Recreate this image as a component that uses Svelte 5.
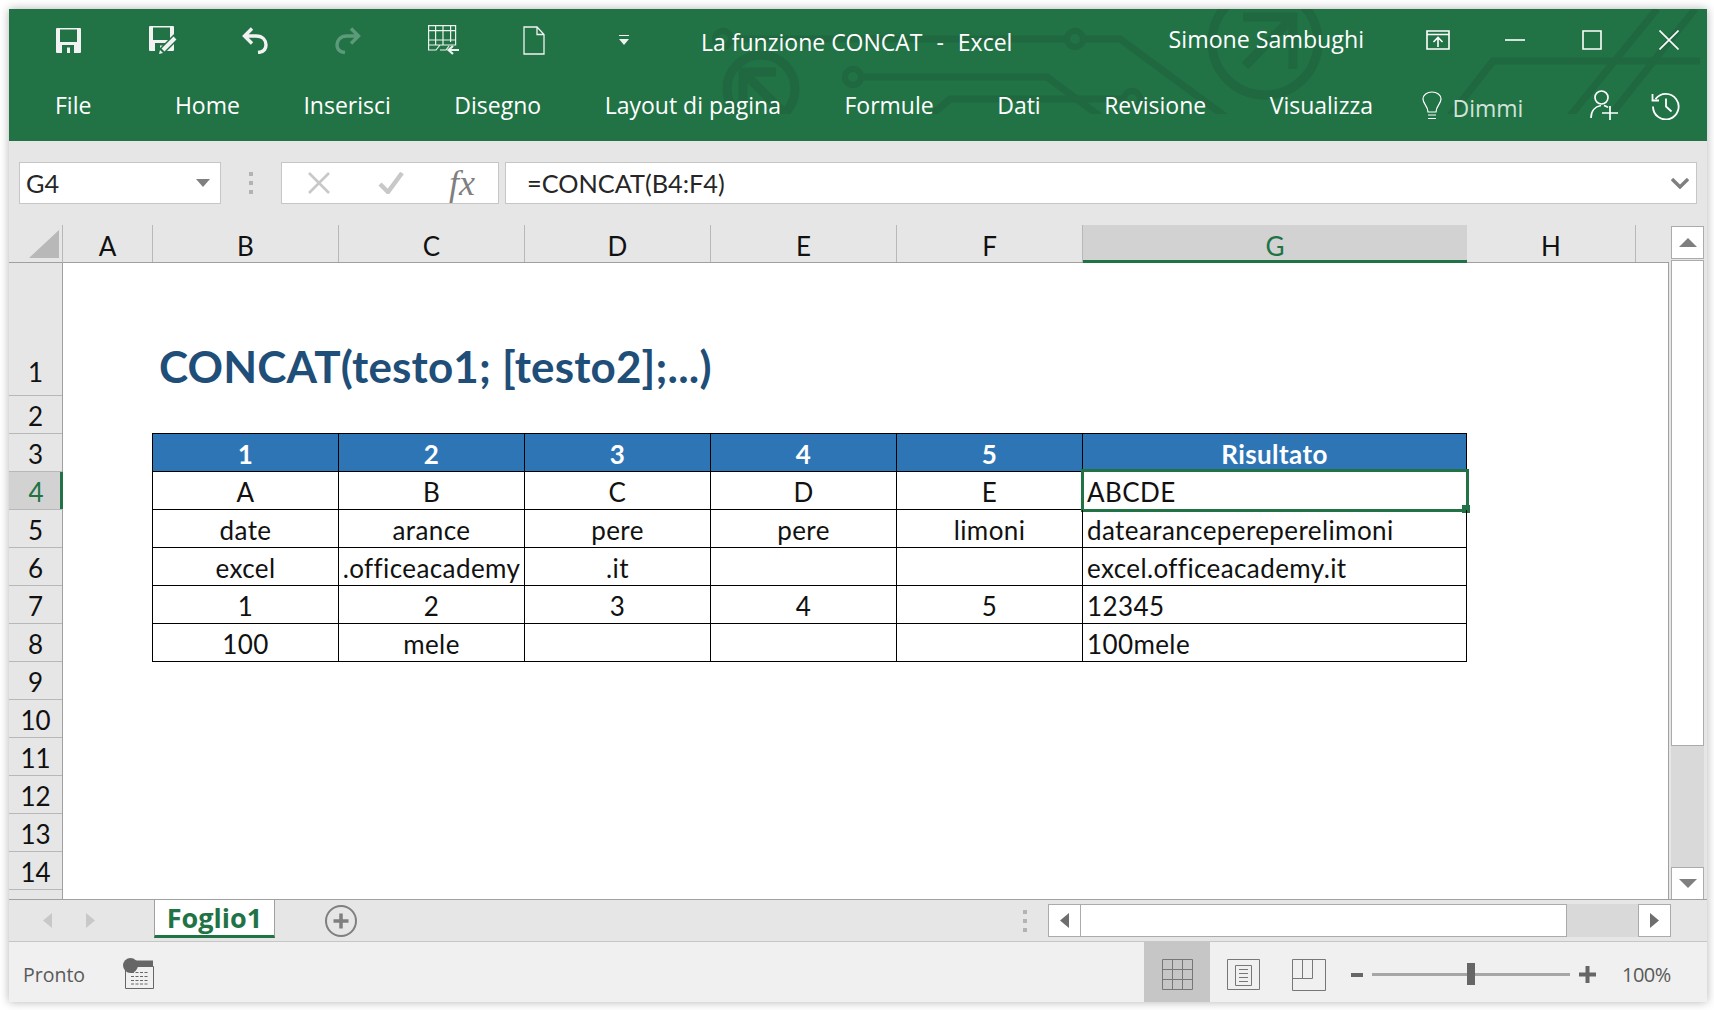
<script>
  const columns = [
    { name: 'A', w: 90 }, { name: 'B', w: 186 }, { name: 'C', w: 186 }, { name: 'D', w: 186 },
    { name: 'E', w: 186 }, { name: 'F', w: 186 }, { name: 'G', w: 384 }, { name: 'H', w: 169 }
  ];
  const rowNums = [1, 2, 3, 4, 5, 6, 7, 8, 9, 10, 11, 12, 13, 14];
  const head = ['1', '2', '3', '4', '5', 'Risultato'];
  const data = [
    ['A', 'B', 'C', 'D', 'E', 'ABCDE'],
    ['date', 'arance', 'pere', 'pere', 'limoni', 'datearancepereperelimoni'],
    ['excel', '.officeacademy', '.it', '', '', 'excel.officeacademy.it'],
    ['1', '2', '3', '4', '5', '12345'],
    ['100', 'mele', '', '', '', '100mele']
  ];
  const tabs = ['Home', 'Inserisci', 'Disegno', 'Layout di pagina', 'Formule', 'Dati', 'Revisione', 'Visualizza'];
</script>

<div class="page">
  <div class="window">
    <header class="ribbon">
      <svg class="circuit" viewBox="9 9 1698 105" fill="none" stroke="#1f6840" stroke-width="7">
        <circle cx="761" cy="89" r="34" stroke-width="9" />
        <path d="M776 72H743V105M743 72L790 119" stroke-width="9" />
        <circle cx="723" cy="39" r="8" stroke-width="6" />
        <path d="M731 39H1067M1083 39H1120L1230 120" />
        <circle cx="1075" cy="39" r="8" stroke-width="6" />
        <circle cx="853" cy="77" r="8" stroke-width="6" />
        <path d="M861 77H1047L1105 120" />
        <path d="M930 116L950 99H1124M1140 99L1160 116" />
        <circle cx="1132" cy="99" r="8" stroke-width="6" />
        <circle cx="1265" cy="42" r="53" stroke-width="9" />
        <path d="M1243 17H1293V69M1293 17L1245 66" stroke-width="9" />
        <path d="M1450 116L1493 61H1700" />
        <path d="M1657 9L1570 116M1695 9L1610 116" />
      </svg>

      <div class="top">
        <div class="qat">
          <button class="qbtn">
            <svg width="25" height="25" viewBox="0 0 25 25"><path fill="#f2f2f2" fill-rule="evenodd" d="M1 0H24a1 1 0 0 1 1 1V24a1 1 0 0 1-1 1H1a1 1 0 0 1-1-1V1a1 1 0 0 1 1-1Z M4 1.5V14H21V1.5Z M6 17V25H11V19.5H14V25H18V17Z" /></svg>
          </button>
          <button class="qbtn nudge">
            <svg width="30" height="29" viewBox="0 0 30 29">
              <path fill="#f2f2f2" fill-rule="evenodd" d="M1 0H24a1 1 0 0 1 1 1V24a1 1 0 0 1-1 1H1a1 1 0 0 1-1-1V1a1 1 0 0 1 1-1Z M4 1.5V14H21V1.5Z M6 17V25H11V19.5H14V25H18V17Z" />
              <path d="M11 27L28 10" stroke="#217346" stroke-width="7" />
              <path d="M14 24L26 12" stroke="#f2f2f2" stroke-width="4" />
              <path d="M10 28L11 24L14 27Z" fill="#f2f2f2" />
            </svg>
          </button>
          <button class="qbtn">
            <svg width="26" height="27" viewBox="0 0 26 27" fill="none" stroke="#f2f2f2" stroke-width="3.4"><path d="M10 1.5L2.5 9L10 16.5M3 9H14C21 9 24 13.5 24 18C24 22 21.5 25 16 25.5" /></svg>
          </button>
          <button class="qbtn">
            <svg width="26" height="27" viewBox="0 0 26 27" fill="none" stroke="#5c9a7a" stroke-width="3.4"><path d="M16 1.5L23.5 9L16 16.5M23 9H12C5 9 2 13.5 2 18C2 22 4.5 25 10 25.5" /></svg>
          </button>
          <button class="qbtn nudge">
            <svg width="31" height="30" viewBox="0 0 31 30" fill="none" stroke="#eef2ef" stroke-width="1.2">
              <path d="M.6.6H27.6V20H.6ZM.6 5.6H27.6M.6 15H27.6M7.6.6V20M15 .6V20M22.6.6V17M.6 20V25H8L12 20M12 25H18L21 21" />
              <path d="M31 25H21M25 21L20.500 25L25 29" stroke-width="2.2" />
            </svg>
          </button>
          <button class="qbtn">
            <svg width="22" height="29" viewBox="0 0 22 29" fill="none" stroke="#f2f2f2" stroke-width="1.3"><path d="M1 1H14L21 8.500V28H1ZM14 1V8.500H21" /></svg>
          </button>
          <button class="qbtn drop">
            <svg width="10" height="10" viewBox="0 0 10 10" fill="#f2f2f2"><path d="M0 0H10V1H0ZM0 4H10L5 10Z" /></svg>
          </button>
        </div>
        <div class="doc-title">La funzione CONCAT <span class="sep">&nbsp;-&nbsp;</span> Excel</div>
        <div class="user">Simone Sambughi</div>
        <div class="controls">
          <button class="ctl">
            <svg width="24" height="20" viewBox="0 0 24 20" fill="none" stroke="#fff" stroke-width="1.6"><path d="M1 1H23V19H1ZM1 4.500H23M12 17V8M7.500 12L12 7.500L16.500 12" /></svg>
          </button>
          <button class="ctl">
            <svg width="20" height="20" viewBox="0 0 20 20" stroke="#fff" stroke-width="1.600"><path d="M0 10H20" /></svg>
          </button>
          <button class="ctl">
            <svg width="20" height="20" viewBox="0 0 20 20" fill="none" stroke="#fff" stroke-width="1.600"><path d="M1 1H19V19H1Z" /></svg>
          </button>
          <button class="ctl">
            <svg width="20" height="20" viewBox="0 0 20 20" stroke="#fff" stroke-width="1.600"><path d="M.5.5L19.500 19.500M19.500.5L.5 19.500" /></svg>
          </button>
        </div>
      </div>

      <nav class="tabs">
        <span class="file">File</span>
        {#each tabs as t}
          <span>{t}</span>
        {/each}
        <div class="tell">
          <svg class="lamp" width="20" height="29" viewBox="0 0 20 29" fill="none" stroke="#fff" stroke-width="1.200"><path d="M6 21C6 15 1 13 1 8C1 4 5 1 10 1S19 4 19 8C19 13 14 15 14 21ZM6 24H14M6 27.500H14" /></svg>
          <span class="dimmi">Dimmi</span>
          <svg class="person" width="29" height="30" viewBox="0 0 29 30" fill="none" stroke="#fff" stroke-width="1.700"><circle cx="11.500" cy="7.500" r="6.500" /><path d="M1 28C1 21 5 16.500 11 15.500M14 15.500C15.500 16 17 16.500 18 17.500M20 16V30M12 23H28" /></svg>
          <svg class="history" width="29" height="29" viewBox="0 0 29 29" fill="none" stroke="#fff" stroke-width="1.800"><path d="M4.500 8A12.800 12.800 0 1 1 2 15.500M1.500 3V9.500H8M15 7.500V15.500L20.500 20.500" /></svg>
        </div>
      </nav>
    </header>

    <div class="formula-bar">
      <div class="name-box">
        <span>G4</span>
        <svg width="14" height="8" viewBox="0 0 14 8" fill="#7f7f7f"><path d="M0 0H14L7 8Z" /></svg>
      </div>
      <div class="grip"><i></i><i></i><i></i></div>
      <div class="fx-box">
        <svg width="24" height="22" viewBox="0 0 24 22" stroke="#c8c8c8" stroke-width="2.600"><path d="M2 1L22 21M22 1L2 21" /></svg>
        <svg width="26" height="22" viewBox="0 0 26 22" fill="none" stroke="#c8c8c8" stroke-width="4.500"><path d="M2 12L10 20L24 1" /></svg>
        <span class="fx">fx</span>
      </div>
      <div class="input">
        <span>=CONCAT(B4:F4)</span>
        <svg width="18" height="11" viewBox="0 0 18 11" fill="none" stroke="#7f7f7f" stroke-width="3.400"><path d="M1 1L9 9L17 1" /></svg>
      </div>
    </div>

    <div class="sheet">
      <div class="grid">
        <div class="corner"><svg width="30" height="28" viewBox="0 0 30 28" fill="#b8b8b8"><path d="M0 28L30 0V28Z" /></svg></div>
        <div class="col-heads">
          {#each columns as c}
            <div class="col-head" class:active={c.name === 'G'} style="width: {c.w}px">{c.name}</div>
          {/each}
        </div>
        <div class="row-heads">
          {#each rowNums as n}
            <div class="row-head" class:tall={n === 1} class:active={n === 4}>{n}</div>
          {/each}
        </div>
        <div class="cells">
          <h1>CONCAT(testo1; [testo2];...)</h1>
          <div class="table">
            {#each head as h, i}
              <div class="cell th" class:wide={i === 5}>{h}</div>
            {/each}
            {#each data as row, r}
              {#each row as v, i}
                <div class="cell" class:wide={i === 5}>
                  {v}
                  {#if i === 5 && r === 0}
                    <div class="selection"><span class="handle"></span></div>
                  {/if}
                </div>
              {/each}
            {/each}
          </div>
        </div>
      </div>
      <div class="vscroll">
        <div class="sbtn"><svg width="18" height="9" viewBox="0 0 18 9" fill="#7f7f7f"><path d="M9 0L18 9H0Z" /></svg></div>
        <div class="vthumb"></div>
        <div class="trough"></div>
        <div class="sbtn down"><svg width="18" height="9" viewBox="0 0 18 9" fill="#7f7f7f"><path d="M0 0H18L9 9Z" /></svg></div>
      </div>
    </div>

    <div class="tabbar">
      <div class="sheet-nav">
        <svg width="9" height="15" viewBox="0 0 9 15" fill="#c8c8c8"><path d="M9 0V15L0 7.500Z" /></svg>
        <svg width="9" height="15" viewBox="0 0 9 15" fill="#c8c8c8"><path d="M0 0V15L9 7.500Z" /></svg>
      </div>
      <div class="sheet-tab">Foglio1</div>
      <svg class="add" width="32" height="32" viewBox="0 0 32 32" fill="none" stroke="#7f7f7f"><circle cx="16" cy="16" r="15" stroke-width="2" /><path d="M16 8.500V23.500M8.500 16H23.500" stroke-width="3.500" /></svg>
      <div class="grip tab-grip"><i></i><i></i><i></i></div>
      <div class="hscroll">
        <div class="hbtn"><svg width="9" height="15" viewBox="0 0 9 15" fill="#6e6e6e"><path d="M9 0V15L0 7.500Z" /></svg></div>
        <div class="hthumb"></div>
        <div class="htrough"></div>
        <div class="hbtn right"><svg width="9" height="15" viewBox="0 0 9 15" fill="#6e6e6e"><path d="M0 0V15L9 7.500Z" /></svg></div>
      </div>
    </div>

    <footer class="status">
      <span class="ready">Pronto</span>
      <svg class="macro" width="31" height="31" viewBox="0 0 31 31">
        <path d="M2.500 8.500H30.500V30.500H2.500Z" fill="none" stroke="#666" />
        <path d="M9 2.500H30V8.500H9Z" fill="#666" />
        <circle cx="7.500" cy="7.500" r="7.500" fill="#666" />
        <path d="M8 14.500H26M8 18.500H26M8 22.500H26M8 26H26" stroke="#666" stroke-dasharray="3 1.500" />
      </svg>
      <div class="views">
        <div class="view on">
          <svg width="31" height="31" viewBox="0 0 31 31" fill="none" stroke="#777"><path d="M.5.5H30.500V30.500H.5ZM.5 10.500H30.500M.5 20.500H30.500M10.500.5V30.500M20.500.5V30.500" /></svg>
        </div>
        <div class="view">
          <svg width="33" height="31" viewBox="0 0 33 31" fill="none" stroke="#777"><path d="M.5.5H32.500V30.500H.5ZM8.500 6.500H24.500V26.500H8.500ZM12 10.500H21M12 14.500H21M12 18.500H21M12 22.500H21" /></svg>
        </div>
        <div class="view">
          <svg width="34" height="32" viewBox="0 0 34 32" fill="none" stroke="#777"><path d="M.5.5H33.500V31.500H.5ZM.5 19.500H20.500V.5M10.500.5V19.500" /></svg>
        </div>
      </div>
      <div class="zoom">
        <span class="minus"></span>
        <div class="slider"><span class="knob"></span></div>
        <svg width="17" height="17" viewBox="0 0 17 17" fill="#666"><path d="M6.500 0H10.500V6.500H17V10.500H10.500V17H6.500V10.500H0V6.500H6.500Z" /></svg>
        <span class="pct">100%</span>
      </div>
    </footer>
  </div>
</div>

<style>
  :global(body) {
    background: #fff;
    overflow: hidden;
  }

  .page {
    padding: 9px;
    width: 1698px;
    height: 993px;
  }

  .window {
    height: 993px;
    display: flex;
    flex-direction: column;
    box-shadow: 0 0 9px rgba(0, 0, 0, 0.3);
    background: #e6e6e6;
    font-family: "Open Sans", sans-serif;
  }

  button {
    border: 0;
    background: none;
    padding: 0;
    display: flex;
    align-items: center;
    justify-content: center;
  }

  /* ribbon */
  .ribbon {
    height: 132px;
    background: #217346;
    position: relative;
    color: #fff;
    flex: none;
  }

  .circuit {
    position: absolute;
    left: 0;
    top: 0;
    width: 1698px;
    height: 105px;
  }

  .top {
    position: relative;
    height: 62px;
    display: flex;
    align-items: center;
    padding-left: 13px;
  }

  .qat {
    display: flex;
  }

  .qbtn {
    width: 93px;
    height: 62px;
  }

  .qbtn.nudge {
    padding-left: 5px;
  }

  .qbtn.drop {
    padding-right: 5px;
  }

  .doc-title {
    margin-left: 28px;
    padding-top: 4px;
    font-size: 23px;
    white-space: pre;
  }

  .sep {
    margin: 0 2px;
  }

  .user {
    margin-left: auto;
    margin-right: 35px;
    padding-bottom: 3px;
    font-size: 23.2px;
  }

  .controls {
    display: flex;
  }

  .ctl {
    width: 77px;
    height: 62px;
  }

  .tabs {
    position: relative;
    height: 68px;
    display: flex;
    align-items: center;
    gap: 63.5px;
    padding-left: 46px;
    font-size: 23px;
    white-space: nowrap;
  }

  .file {
    margin-right: 20px;
  }

  .tell {
    margin-left: -15px;
    display: flex;
    align-items: center;
  }

  .dimmi {
    margin-left: 11px;
    color: #d3e3da;
    padding-top: 5px;
  }

  .person {
    margin-left: 67px;
  }

  .history {
    margin-left: 32px;
  }

  /* formula bar */
  .formula-bar {
    height: 84px;
    flex: none;
    box-sizing: border-box;
    padding: 21px 10px;
    display: flex;
    align-items: stretch;
    font-family: Lato, sans-serif;
    font-size: 25.3px;
    color: #262626;
  }

  .name-box {
    width: 202px;
    box-sizing: border-box;
    background: #fff;
    border: 1px solid #c6c6c6;
    display: flex;
    align-items: center;
    justify-content: space-between;
    padding: 0 10px 0 6px;
  }

  .grip {
    display: flex;
    flex-direction: column;
    justify-content: center;
    gap: 5px;
    width: 60px;
    align-items: center;
  }

  .grip i {
    width: 4px;
    height: 4px;
    background: #b3b3b3;
  }

  .fx-box {
    width: 218px;
    box-sizing: border-box;
    background: #fff;
    border: 1px solid #c6c6c6;
    display: flex;
    align-items: center;
    gap: 47px;
    padding-left: 25px;
  }

  .fx {
    font-family: "Liberation Serif", serif;
    font-style: italic;
    font-size: 36px;
    color: #7f7f7f;
    margin-left: -2px;
  }

  .input {
    flex: 1;
    margin-left: 6px;
    background: #fff;
    border: 1px solid #c6c6c6;
    display: flex;
    align-items: center;
    justify-content: space-between;
    padding: 0 7px 0 21px;
  }

  /* sheet */
  .sheet {
    height: 674px;
    flex: none;
    display: flex;
    font-family: Lato, sans-serif;
    color: #111;
  }

  .grid {
    width: 1660px;
    display: grid;
    grid-template-columns: 54px 1fr;
    grid-template-rows: 38px 1fr;
  }

  .corner {
    border-bottom: 1px solid #a0a0a0;
    border-right: 1px solid #b8b8b8;
    box-sizing: border-box;
    display: flex;
    align-items: flex-end;
    justify-content: flex-end;
    padding: 0 3px 4px 0;
  }

  .col-heads {
    display: flex;
    border-bottom: 1px solid #a0a0a0;
    box-sizing: border-box;
  }

  .col-head {
    box-sizing: border-box;
    border-right: 1px solid #b8b8b8;
    text-align: center;
    font-size: 26px;
    line-height: 38px;
    padding-top: 2px;
  }

  .col-head.active {
    background: #d2d2d2;
    color: #217346;
    border-right: 0;
    border-bottom: 3px solid #217346;
    height: 38px;
  }

  .row-heads {
    border-right: 1px solid #a0a0a0;
    box-sizing: border-box;
  }

  .row-head {
    box-sizing: border-box;
    height: 38px;
    border-bottom: 1px solid #b8b8b8;
    font-size: 26px;
    line-height: 37px;
    text-align: center;
    padding-top: 2px;
  }

  .row-head.tall {
    height: 133px;
    padding-top: 91px;
  }

  .row-head.active {
    background: #d2d2d2;
    color: #217346;
    box-shadow: inset -3px 0 0 #217346;
    margin-right: -1px;
  }

  .cells {
    background: #fff;
    border-right: 1px solid #a0a0a0;
    padding-left: 89px;
    box-sizing: border-box;
  }

  h1 {
    margin: 0;
    height: 170px;
    box-sizing: border-box;
    padding: 75px 0 0 7px;
    font-size: 44px;
    line-height: 56px;
    font-weight: 700;
    color: #1f4e79;
    letter-spacing: 0.15px;
  }

  .table {
    display: grid;
    grid-template-columns: repeat(5, 186px) 384px;
    grid-auto-rows: 38px;
    border-left: 1px solid #000;
    border-top: 1px solid #000;
    width: max-content;
    position: relative;
    font-size: 26px;
    letter-spacing: 0.4px;
  }

  .cell {
    position: relative;
    box-sizing: border-box;
    border-right: 1px solid #000;
    border-bottom: 1px solid #000;
    text-align: center;
    line-height: 40px;
    white-space: nowrap;
    overflow: visible;
  }

  .cell.wide {
    text-align: left;
    padding-left: 4px;
  }

  .cell.th {
    background: #2e75b6;
    color: #fff;
    font-weight: 700;
    text-align: center;
    padding-left: 0;
  }

  .selection {
    position: absolute;
    left: -2px;
    top: -3px;
    width: 388px;
    height: 43px;
    box-sizing: border-box;
    border: 3px solid #217346;
    pointer-events: none;
  }

  .handle {
    position: absolute;
    right: -4px;
    bottom: -4px;
    width: 8px;
    height: 8px;
    background: #217346;
  }

  /* scrollbars */
  .vscroll {
    flex: 1;
    display: flex;
    flex-direction: column;
    padding: 1px 3px 0 2px;
  }

  .sbtn {
    height: 33px;
    box-sizing: border-box;
    flex: none;
    border: 1px solid #ababab;
    background: #fff;
    display: flex;
    align-items: center;
    justify-content: center;
  }

  .sbtn.down {
    margin-bottom: -1px;
  }

  .vthumb {
    height: 486px;
    flex: none;
    box-sizing: border-box;
    border: 1px solid #ababab;
    background: #fff;
    margin-top: 1px;
  }

  .trough {
    flex: 1;
    background: #d9d9d9;
  }

  .tabbar {
    height: 43px;
    flex: none;
    box-sizing: border-box;
    border-top: 1px solid #a0a0a0;
    border-bottom: 1px solid #c6c6c6;
    display: flex;
    align-items: center;
    position: relative;
  }

  .sheet-nav {
    display: flex;
    gap: 34px;
    padding-left: 34px;
    width: 145px;
    box-sizing: border-box;
  }

  .sheet-tab {
    align-self: stretch;
    width: 121px;
    box-sizing: border-box;
    margin-bottom: 3px;
    background: #fff;
    border-left: 1px solid #a0a0a0;
    border-right: 1px solid #a0a0a0;
    border-bottom: 3px solid #217346;
    color: #217346;
    font-weight: 700;
    font-size: 27px;
    text-align: center;
    line-height: 35px;
  }

  .add {
    margin-left: 50px;
  }

  .tab-grip {
    margin-left: 645px;
    width: 45px;
  }

  .hscroll {
    display: flex;
    height: 33px;
    margin-left: 1px;
  }

  .hbtn {
    width: 33px;
    box-sizing: border-box;
    background: #fff;
    border: 1px solid #ababab;
    display: flex;
    align-items: center;
    justify-content: center;
  }

  .hthumb {
    width: 486px;
    box-sizing: border-box;
    background: #fff;
    border: 1px solid #ababab;
    border-left: 0;
  }

  .htrough {
    width: 71px;
    background: #d9d9d9;
  }

  /* status bar */
  .status {
    flex: 1;
    background: #f0f0f0;
    display: flex;
    align-items: center;
    color: #595959;
    font-size: 19.5px;
  }

  .ready {
    margin-left: 14px;
    margin-top: 5px;
  }

  .macro {
    margin-left: 38px;
    margin-top: 3px;
  }

  .views {
    margin-left: auto;
    align-self: stretch;
    display: flex;
  }

  .view {
    width: 66px;
    padding-top: 5px;
    display: flex;
    align-items: center;
    justify-content: center;
  }

  .view.on {
    background: #c6c6c6;
  }

  .zoom {
    display: flex;
    align-items: center;
    padding: 5px 37px 0 0;
    margin-left: 9px;
  }

  .minus {
    width: 12px;
    height: 4px;
    background: #666;
  }

  .slider {
    width: 198px;
    height: 3px;
    background: #a6a6a6;
    margin: 0 9px;
    position: relative;
  }

  .knob {
    position: absolute;
    left: 95px;
    top: -10px;
    width: 8px;
    height: 22px;
    background: #666;
  }

  .pct {
    margin-left: 26px;
    width: 48px;
    font-size: 20px;
    letter-spacing: -0.5px;
  }
</style>
